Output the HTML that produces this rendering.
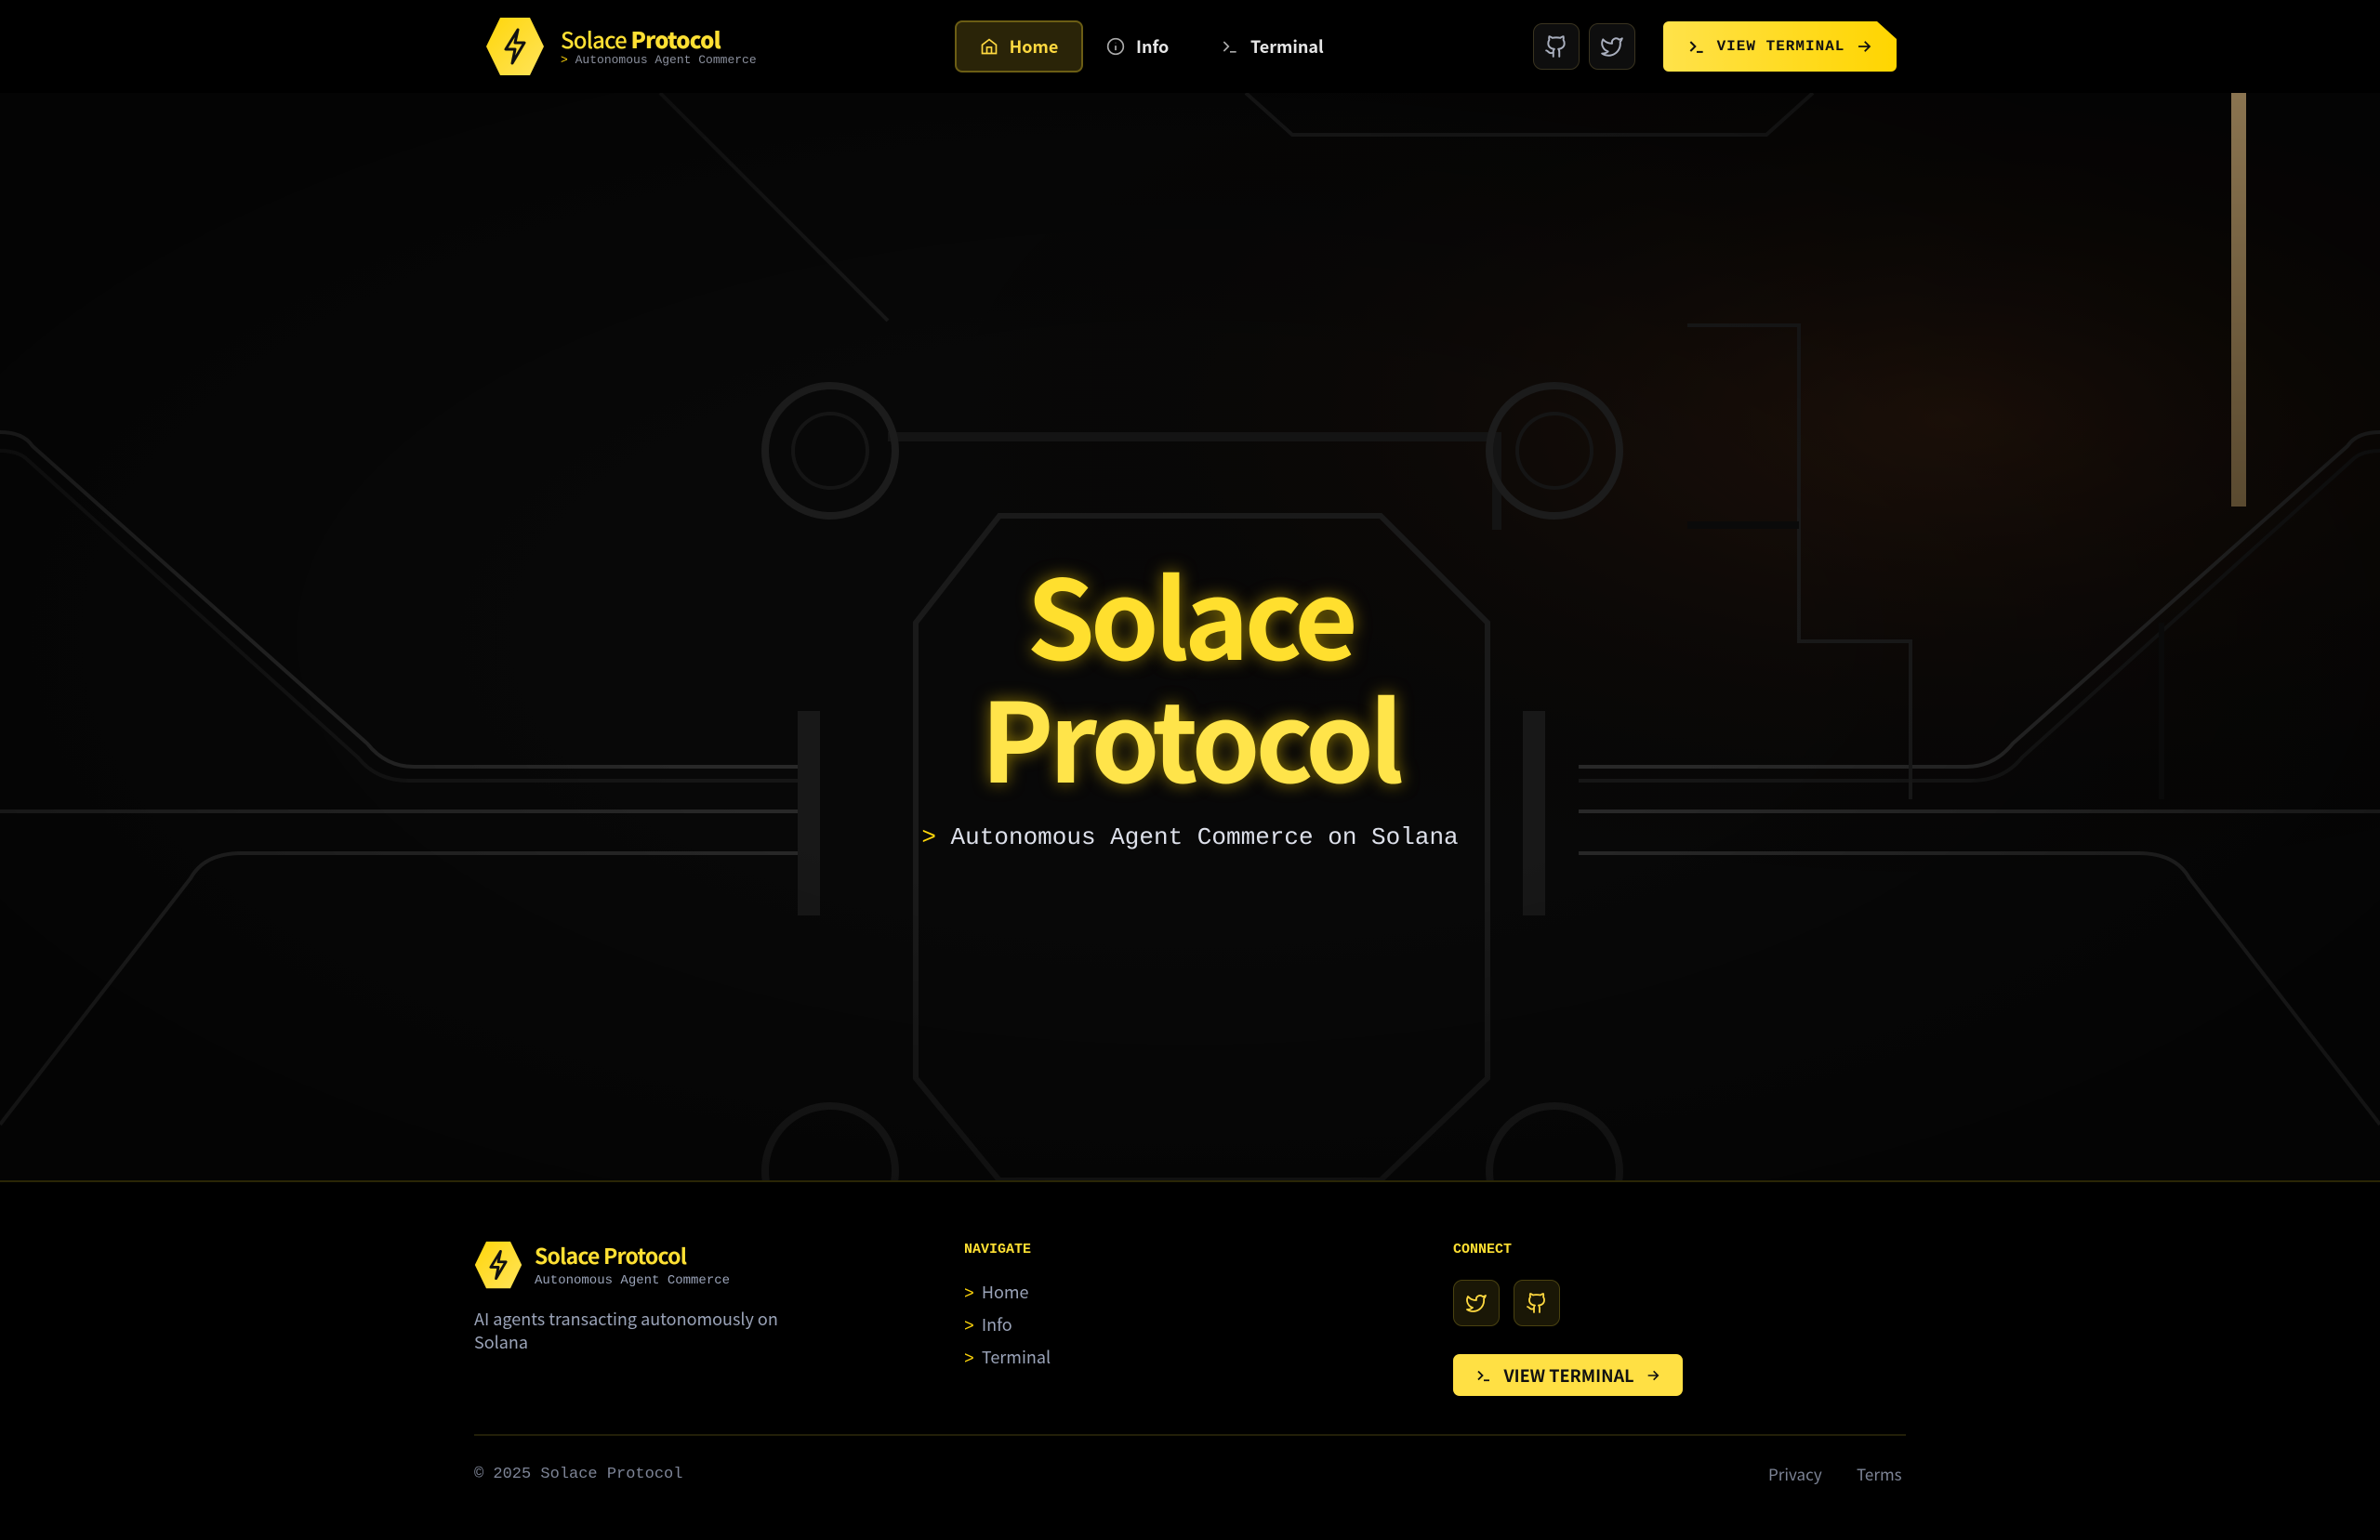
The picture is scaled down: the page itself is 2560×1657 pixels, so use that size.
<!DOCTYPE html>
<html><head><meta charset="utf-8">
<style>
*{margin:0;padding:0;box-sizing:border-box}
html,body{width:2560px;height:1657px;background:#000;overflow:hidden}
body{position:relative;font-family:"Noto Sans CJK JP","Liberation Sans",sans-serif;color:#fff}
.mono{font-family:"Liberation Mono","DejaVu Sans Mono",monospace}
header{position:absolute;left:0;top:0;width:2560px;height:100px;background:#000;z-index:5}
.abs{position:absolute}
.hero{position:absolute;left:0;top:100px;width:2560px;height:1170px;overflow:hidden;background:#050505}
.navbtn{position:absolute;top:22px;height:56px;display:flex;align-items:center;gap:12px;font-size:18px;font-weight:700;color:#e6e6e6;font-family:"Noto Sans CJK JP","Liberation Sans",sans-serif}
.sq{position:absolute;width:50px;height:50px;border:1.5px solid #3a3420;border-radius:10px;background:#0e0e0e;display:flex;align-items:center;justify-content:center}
footer{position:absolute;left:0;top:1270px;width:2560px;height:387px;border-top:2px solid #2a2606;background:#000}
.fl{position:absolute;font-size:18px;color:#9aa3b8}
</style></head><body>
<header>
  <svg class="abs" style="left:522px;top:18px" width="64" height="64" viewBox="0 0 64 64">
    <defs><linearGradient id="hg" x1="0" y1="0" x2="1" y2="1"><stop offset="0" stop-color="#ffd60a"/><stop offset="1" stop-color="#ffe45a"/></linearGradient></defs>
    <polygon points="16,1 48,1 63,32 48,63 16,63 1,32" fill="url(#hg)"/>
    <path d="M35 14 L22 35 H32 L29 50 L42 28 H32 Z" fill="none" stroke="#111" stroke-width="3" stroke-linejoin="round"/>
  </svg>
  <div class="abs" style="left:603px;top:27px;font-size:24px;font-weight:500;color:#ffe033;letter-spacing:-0.8px;line-height:30px">Solace <b style="font-weight:800">Protocol</b></div>
  <div class="abs mono" style="left:603px;top:57px;font-size:13px;color:#8a8f9c"><span style="color:#ffd60a">&gt;</span> Autonomous Agent Commerce</div>

  <div class="navbtn" style="left:1027px;width:138px;border:2px solid #6b5d14;background:#2a2408;border-radius:8px;justify-content:center;color:#ffd940">
    <svg width="20" height="20" viewBox="0 0 24 24" fill="none" stroke="#ffd940" stroke-width="2"><path d="M3 10 L12 3 L21 10 V21 H3 Z"/><path d="M9 21 V13 H15 V21"/></svg>Home</div>
  <div class="navbtn" style="left:1190px">
    <svg width="20" height="20" viewBox="0 0 24 24" fill="none" stroke="#aaa" stroke-width="2"><circle cx="12" cy="12" r="10"/><path d="M12 11v6M12 7v.5"/></svg>Info</div>
  <div class="navbtn" style="left:1313px">
    <svg width="20" height="20" viewBox="0 0 24 24" fill="none" stroke="#aaa" stroke-width="2"><path d="M4 6 L10 12 L4 18M12 19h8"/></svg>Terminal</div>

  <div class="sq" style="left:1649px;top:25px"><svg width="26" height="26" viewBox="0 0 24 24" fill="none" stroke="#aab0bf" stroke-width="1.8" stroke-linecap="round" stroke-linejoin="round"><path d="M15 22v-4a4.8 4.8 0 0 0-1-3.5c3 0 6-2 6-5.5.08-1.25-.27-2.48-1-3.5.28-1.15.28-2.350 0-3.5 0 0-1 0-3 1.5-2.64-.5-5.36-.5-8 0C6 2 5 2 5 2c-.3 1.15-.3 2.35 0 3.5A5.4 5.4 0 0 0 4 9c0 3.5 3 5.5 6 5.5-.39.49-.68 1.050-.85 1.65S8.93 17.38 9 18v4"/><path d="M9 18c-4.51 2-5-2-7-2"/></svg></div>
  <div class="sq" style="left:1709px;top:25px"><svg width="26" height="26" viewBox="0 0 24 24" fill="none" stroke="#aab0bf" stroke-width="1.8" stroke-linejoin="round"><path d="M22 4s-.7 2.1-2 3.4c1.6 10-9.4 17.3-18 11.6 2.2.1 4.4-.6 6-2C3 15.5.5 9.6 3 5c2.2 2.6 5.6 4.1 9 4-.9-4.2 4-6.6 7-3.8 1.1 0 3-1.2 3-1.2z"/></svg></div>

  <div class="abs mono" style="left:1789px;top:23px;width:251px;height:54px;background:linear-gradient(90deg,#ffe24a,#ffd500);clip-path:polygon(0 0,230px 0,251px 19px,251px 100%,0 100%);border-radius:6px;display:flex;align-items:center;justify-content:center;gap:12px;color:#111;font-weight:700;font-size:16px;letter-spacing:1px">
    <svg width="20" height="20" viewBox="0 0 24 24" fill="none" stroke="#111" stroke-width="2.4"><path d="M4 6 L10 12 L4 18M12 19h8"/></svg>VIEW TERMINAL
    <svg width="18" height="18" viewBox="0 0 24 24" fill="none" stroke="#111" stroke-width="2.4"><path d="M4 12h15M13 5l7 7-7 7"/></svg></div>
</header>

<div class="hero">
  <svg class="abs" style="left:0;top:0" width="2560" height="1170" viewBox="0 0 2560 1170">
    <defs>
      <radialGradient id="warm" cx="0.82" cy="0.3" r="0.45"><stop offset="0" stop-color="#24140a" stop-opacity="0.85"/><stop offset="1" stop-color="#000" stop-opacity="0"/></radialGradient>
      <radialGradient id="vig" cx="0.5" cy="0.5" r="0.6"><stop offset="0.4" stop-color="#000" stop-opacity="0"/><stop offset="1" stop-color="#000" stop-opacity="0.5"/></radialGradient>
      <linearGradient id="bar" x1="0" y1="0" x2="0" y2="1"><stop offset="0" stop-color="#8a7450"/><stop offset="1" stop-color="#5a4a30"/></linearGradient>
    </defs>
    <rect width="2560" height="1170" fill="#080808"/>
    <rect width="2560" height="1170" fill="url(#warm)"/>
    <g fill="none" stroke="#282828" stroke-width="4">
      <path d="M0 365 Q25 365 35 380 L395 700 Q415 725 445 725 L865 725"/>
      <path d="M0 385 Q20 385 30 395 L385 715 Q405 740 440 740 L865 740" stroke="#161616"/>
      <path d="M0 773 L865 773"/>
      <path d="M0 1110 L205 845 Q220 818 260 818 L865 818"/>
      <path d="M2560 365 Q2535 365 2525 380 L2165 700 Q2145 725 2115 725 L1698 725"/>
      <path d="M2560 385 Q2540 385 2530 395 L2175 715 Q2155 740 2120 740 L1698 740" stroke="#161616"/>
      <path d="M2560 773 L1698 773"/>
      <path d="M2560 1110 L2355 845 Q2340 818 2300 818 L1698 818"/>
      <path d="M710 0 L955 245" stroke="#1a1a1a"/>
      <path d="M1340 0 L1390 45 L1900 45 L1950 0" stroke="#1e1e1e"/>
      <path d="M1075 455 L1485 455 L1600 570 L1600 1060 L1485 1170 L1075 1170 L985 1060 L985 570 Z" stroke="#1a1a1a" stroke-width="6"/>
      <path d="M955 370 L1610 370 L1610 470" stroke="#141414" stroke-width="10"/>
      <circle cx="893" cy="385" r="70" stroke="#1c1c1c" stroke-width="8"/>
      <circle cx="893" cy="385" r="40" stroke="#151515"/>
      <circle cx="1672" cy="385" r="70" stroke="#1c1c1c" stroke-width="8"/>
      <circle cx="1672" cy="385" r="40" stroke="#151515"/>
      <circle cx="893" cy="1160" r="70" stroke="#1c1c1c" stroke-width="8"/>
      <circle cx="1672" cy="1160" r="70" stroke="#1c1c1c" stroke-width="8"/>
      <path d="M870 665 L870 885 M1650 665 L1650 885" stroke="#181818" stroke-width="24"/>
      <path d="M1815 250 L1935 250 L1935 590 L2055 590 L2055 760" stroke="#1a1a1a"/>
      <path d="M1815 465 L1935 465" stroke="#0a0a0a" stroke-width="8"/>
      <path d="M2325 570 L2325 760" stroke="#0d0d0d" stroke-width="6"/>
    </g>
    <rect width="2560" height="1170" fill="url(#vig)"/>
    <rect x="2400" y="0" width="16" height="445" fill="url(#bar)"/>
  </svg>
  <div class="abs" style="left:0;top:494px;width:2560px;text-align:center;font-family:'Noto Sans CJK JP','Liberation Sans',sans-serif;font-weight:700;font-size:118px;line-height:130px;letter-spacing:-5px;color:#ffe44a;text-shadow:0 0 18px rgba(255,214,0,0.5)">
    <div style="display:inline-block;color:#ffdf2e">Solace</div><br>
    <div style="display:inline-block;margin-top:2px">Protocol</div>
  </div>
  <div class="abs mono" style="left:0;top:786px;width:2560px;text-align:center;font-size:26px;color:#dde0ea"><span style="color:#ffd60a">&gt;</span> Autonomous Agent Commerce on Solana</div>
</div>

<footer>
  <svg class="abs" style="left:510px;top:63px" width="52" height="52" viewBox="0 0 64 64">
    <polygon points="16,1 48,1 63,32 48,63 16,63 1,32" fill="url(#hg)"/>
    <path d="M35 14 L22 35 H32 L29 50 L42 28 H32 Z" fill="none" stroke="#111" stroke-width="3.5" stroke-linejoin="round"/>
  </svg>
  <div class="abs" style="left:575px;top:61px;font-size:23px;font-weight:700;color:#ffe033;letter-spacing:-0.8px">Solace Protocol</div>
  <div class="abs mono" style="left:575px;top:98px;font-size:14px;color:#9aa3b8">Autonomous Agent Commerce</div>
  <div class="fl" style="left:510px;top:135px;line-height:25px">AI agents transacting autonomously on<br>Solana</div>

  <div class="abs mono" style="left:1037px;top:64px;font-size:15px;font-weight:700;color:#ffe033">NAVIGATE</div>
  <div class="fl" style="left:1037px;top:105px"><span style="color:#ffd60a" class="mono">&gt;</span>&nbsp; Home</div>
  <div class="fl" style="left:1037px;top:140px"><span style="color:#ffd60a" class="mono">&gt;</span>&nbsp; Info</div>
  <div class="fl" style="left:1037px;top:175px"><span style="color:#ffd60a" class="mono">&gt;</span>&nbsp; Terminal</div>

  <div class="abs mono" style="left:1563px;top:64px;font-size:15px;font-weight:700;color:#ffe033">CONNECT</div>
  <div class="sq" style="left:1563px;top:105px;background:#1a1706;border-color:#4a4210"><svg width="24" height="24" viewBox="0 0 24 24" fill="none" stroke="#ffd940" stroke-width="1.8" stroke-linejoin="round"><path d="M22 4s-.7 2.1-2 3.4c1.6 10-9.4 17.3-18 11.6 2.2.1 4.4-.6 6-2C3 15.5.5 9.6 3 5c2.2 2.6 5.6 4.1 9 4-.9-4.2 4-6.6 7-3.8 1.1 0 3-1.2 3-1.2z"/></svg></div>
  <div class="sq" style="left:1628px;top:105px;background:#1a1706;border-color:#4a4210"><svg width="24" height="24" viewBox="0 0 24 24" fill="none" stroke="#ffd940" stroke-width="1.8" stroke-linecap="round" stroke-linejoin="round"><path d="M15 22v-4a4.8 4.8 0 0 0-1-3.5c3 0 6-2 6-5.5.08-1.25-.27-2.48-1-3.5.28-1.15.28-2.35 0-3.5 0 0-1 0-3 1.5-2.64-.5-5.36-.5-8 0C6 2 5 2 5 2c-.3 1.15-.3 2.35 0 3.5A5.4 5.4 0 0 0 4 9c0 3.5 3 5.5 6 5.5-.39.49-.68 1.05-.85 1.65S8.93 17.38 9 18v4"/><path d="M9 18c-4.51 2-5-2-7-2"/></svg></div>
  <div class="abs" style="left:1563px;top:185px;width:247px;height:45px;background:#ffe044;border-radius:7px;display:flex;align-items:center;justify-content:center;gap:12px;color:#111;font-weight:700;font-size:18px">
    <svg width="18" height="18" viewBox="0 0 24 24" fill="none" stroke="#111" stroke-width="2.4"><path d="M4 6 L10 12 L4 18M12 19h8"/></svg>VIEW TERMINAL
    <svg width="16" height="16" viewBox="0 0 24 24" fill="none" stroke="#111" stroke-width="2.4"><path d="M4 12h15M13 5l7 7-7 7"/></svg></div>

  <div class="abs" style="left:510px;top:271px;width:1540px;height:2px;background:#221f08"></div>
  <div class="abs mono" style="left:510px;top:305px;font-size:17px;color:#7d8496">© 2025 Solace Protocol</div>
  <div class="fl" style="left:1902px;top:301px;font-size:17px;color:#7d8496">Privacy</div>
  <div class="fl" style="left:1997px;top:301px;font-size:17px;color:#7d8496">Terms</div>
</footer>
</body></html>
